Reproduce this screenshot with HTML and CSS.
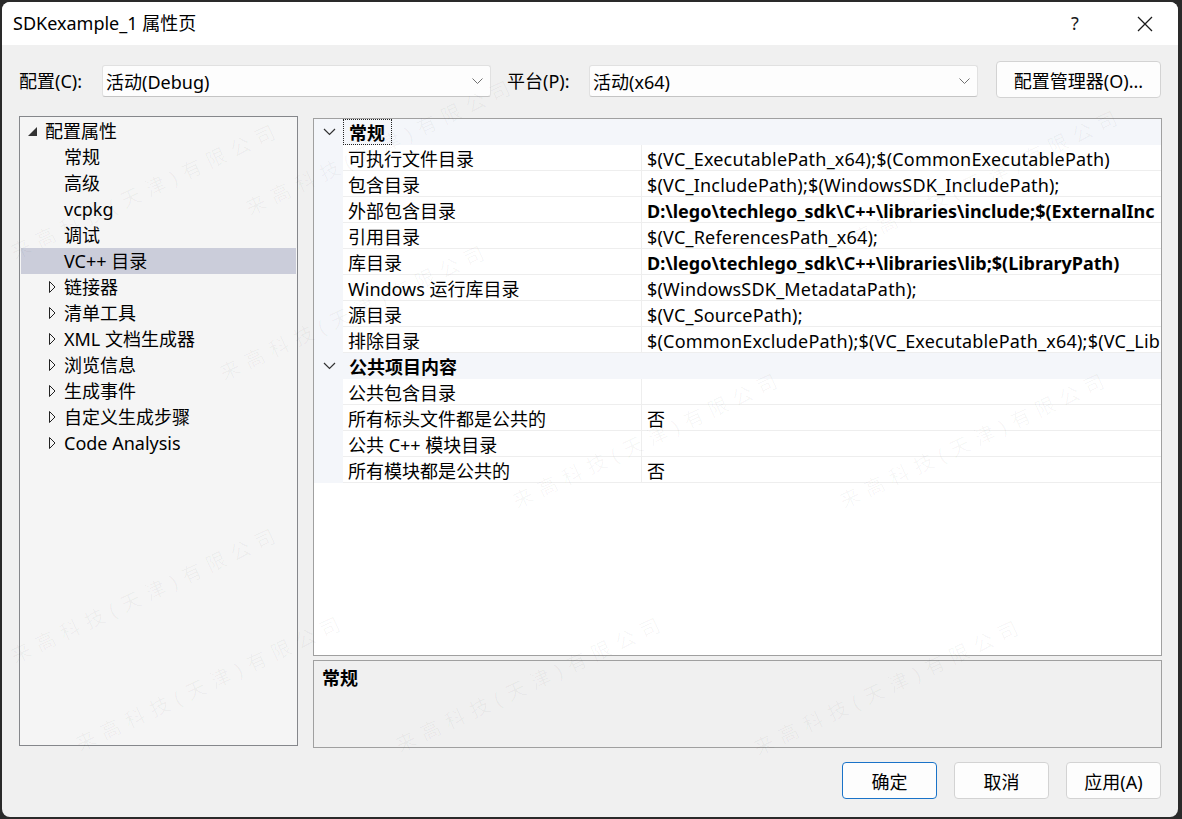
FILE: index.html
```html
<!DOCTYPE html>
<html>
<head lang="zh-CN">
    <meta charset="UTF-8">
    <title>SDKexample_1 属性页</title>
    <link rel="stylesheet" href="styles.css">
</head>
<body>
<div class="window">
    <div class="titlebar">
        <span class="title">SDKexample_1 属性页</span>
        <span class="help">?</span>
        <span class="close">
            <svg width="16" height="16" viewBox="0 0 16 16"><path d="M1 1L15 15M15 1L1 15" stroke="#1a1a1a" stroke-width="1.3" fill="none"/></svg>
        </span>
    </div>

    <div class="body">
        <div class="config-row">
            <span class="lbl">配置(C):</span>
            <div class="combo">
                <span>活动(Debug)</span>
                <svg width="11" height="6" viewBox="0 0 11 6"><path d="M0.5 0.5L5.5 5.5L10.5 0.5" stroke="#707070" fill="none"/></svg>
            </div>
            <span class="lbl lbl-platform">平台(P):</span>
            <div class="combo">
                <span>活动(x64)</span>
                <svg width="11" height="6" viewBox="0 0 11 6"><path d="M0.5 0.5L5.5 5.5L10.5 0.5" stroke="#707070" fill="none"/></svg>
            </div>
            <button class="btn btn-mgr">配置管理器(O)...</button>
        </div>

        <div class="main">
            <div class="tree">
                <div class="node root">
                    <svg class="tri-open" width="9" height="9" viewBox="0 0 9 9"><path d="M9 0L9 9L0 9Z" fill="#333"/></svg>
                    <span>配置属性</span>
                </div>
                <div class="node leaf">常规</div>
                <div class="node leaf">高级</div>
                <div class="node leaf">vcpkg</div>
                <div class="node leaf">调试</div>
                <div class="node leaf selected">VC++ 目录</div>
                <div class="node closed">
                    <svg class="tri" width="7" height="12" viewBox="0 0 7 12"><path d="M0.5 0.5L6 6L0.5 11.5Z" stroke="#222" fill="none"/></svg>
                    <span>链接器</span>
                </div>
                <div class="node closed">
                    <svg class="tri" width="7" height="12" viewBox="0 0 7 12"><path d="M0.5 0.5L6 6L0.5 11.5Z" stroke="#222" fill="none"/></svg>
                    <span>清单工具</span>
                </div>
                <div class="node closed">
                    <svg class="tri" width="7" height="12" viewBox="0 0 7 12"><path d="M0.5 0.5L6 6L0.5 11.5Z" stroke="#222" fill="none"/></svg>
                    <span>XML 文档生成器</span>
                </div>
                <div class="node closed">
                    <svg class="tri" width="7" height="12" viewBox="0 0 7 12"><path d="M0.5 0.5L6 6L0.5 11.5Z" stroke="#222" fill="none"/></svg>
                    <span>浏览信息</span>
                </div>
                <div class="node closed">
                    <svg class="tri" width="7" height="12" viewBox="0 0 7 12"><path d="M0.5 0.5L6 6L0.5 11.5Z" stroke="#222" fill="none"/></svg>
                    <span>生成事件</span>
                </div>
                <div class="node closed">
                    <svg class="tri" width="7" height="12" viewBox="0 0 7 12"><path d="M0.5 0.5L6 6L0.5 11.5Z" stroke="#222" fill="none"/></svg>
                    <span>自定义生成步骤</span>
                </div>
                <div class="node closed">
                    <svg class="tri" width="7" height="12" viewBox="0 0 7 12"><path d="M0.5 0.5L6 6L0.5 11.5Z" stroke="#222" fill="none"/></svg>
                    <span>Code Analysis</span>
                </div>
            </div>

            <div class="right">
                <div class="grid">
                    <div class="cat">
                        <svg class="chev" width="13" height="8" viewBox="0 0 13 8"><path d="M1 1L6.5 6.5L12 1" stroke="#333" stroke-width="1.2" fill="none"/></svg>
                        <span class="cat-name focus">常规</span>
                    </div>
                    <div class="prop"><span class="gutter"></span><span class="name">可执行文件目录</span><span class="value">$(VC_ExecutablePath_x64);$(CommonExecutablePath)</span></div>
                    <div class="prop"><span class="gutter"></span><span class="name">包含目录</span><span class="value">$(VC_IncludePath);$(WindowsSDK_IncludePath);</span></div>
                    <div class="prop"><span class="gutter"></span><span class="name">外部包含目录</span><span class="value bold">D:\lego\techlego_sdk\C++\libraries\include;$(ExternalInc</span></div>
                    <div class="prop"><span class="gutter"></span><span class="name">引用目录</span><span class="value">$(VC_ReferencesPath_x64);</span></div>
                    <div class="prop"><span class="gutter"></span><span class="name">库目录</span><span class="value bold">D:\lego\techlego_sdk\C++\libraries\lib;$(LibraryPath)</span></div>
                    <div class="prop"><span class="gutter"></span><span class="name">Windows 运行库目录</span><span class="value">$(WindowsSDK_MetadataPath);</span></div>
                    <div class="prop"><span class="gutter"></span><span class="name">源目录</span><span class="value">$(VC_SourcePath);</span></div>
                    <div class="prop"><span class="gutter"></span><span class="name">排除目录</span><span class="value">$(CommonExcludePath);$(VC_ExecutablePath_x64);$(VC_Lib</span></div>
                    <div class="cat">
                        <svg class="chev" width="13" height="8" viewBox="0 0 13 8"><path d="M1 1L6.5 6.5L12 1" stroke="#333" stroke-width="1.2" fill="none"/></svg>
                        <span class="cat-name">公共项目内容</span>
                    </div>
                    <div class="prop"><span class="gutter"></span><span class="name">公共包含目录</span><span class="value"></span></div>
                    <div class="prop"><span class="gutter"></span><span class="name">所有标头文件都是公共的</span><span class="value">否</span></div>
                    <div class="prop"><span class="gutter"></span><span class="name">公共 C++ 模块目录</span><span class="value"></span></div>
                    <div class="prop"><span class="gutter"></span><span class="name">所有模块都是公共的</span><span class="value">否</span></div>
                </div>
                <div class="desc">
                    <b>常规</b>
                </div>
            </div>
        </div>

        <div class="footer">
            <button class="btn btn-ok">确定</button>
            <button class="btn">取消</button>
            <button class="btn">应用(A)</button>
        </div>
    </div>

    <!-- watermark of the screenshot -->
    <div class="watermark">
        <span style="left:16px;top:236px">来高科技(天津)有限公司</span>
        <span style="left:251px;top:192px">来高科技(天津)有限公司</span>
        <span style="left:858px;top:222px">来高科技(天津)有限公司</span>
        <span style="left:225px;top:357px">来高科技(天津)有限公司</span>
        <span style="left:518px;top:485px">来高科技(天津)有限公司</span>
        <span style="left:845px;top:485px">来高科技(天津)有限公司</span>
        <span style="left:16px;top:640px">来高科技(天津)有限公司</span>
        <span style="left:81px;top:728px">来高科技(天津)有限公司</span>
        <span style="left:401px;top:729px">来高科技(天津)有限公司</span>
        <span style="left:759px;top:732px">来高科技(天津)有限公司</span>
    </div>
</div>
</body>
</html>
```

FILE: styles.css
```css
html, body {
    margin: 0;
    padding: 0;
}

body {
    background: #2a2a2a;
    font-family: "Noto Sans", "Noto Sans CJK SC", sans-serif;
    font-size: 18px;
    color: #000;
}

.window {
    position: relative;
    margin: 2px 0 0 2px;
    width: 1176px;
    height: 815px;
    background: #f0f0f0;
    border-radius: 8px;
    overflow: hidden;
}

/* title bar */
.titlebar {
    height: 43px;
    background: #fff;
    display: flex;
    align-items: center;
    padding-left: 11px;
}

.titlebar .title {
    flex: 1;
    line-height: 24px;
    margin-top: -2px;
}

.titlebar .help {
    width: 20px;
    text-align: center;
    font-size: 18px;
    color: #1a1a1a;
    margin-top: -2px;
}

.titlebar .close {
    display: flex;
    margin: 0 25px 0 52px;
}

.body {
    padding: 16px 16px 0 17px;
}

/* config row */
.config-row {
    display: flex;
    height: 37px;
}

.config-row .lbl {
    width: 83px;
    line-height: 32px;
    margin-top: 4px;
}

.config-row .lbl-platform {
    width: 82px;
    margin-left: 16px;
}

.combo {
    box-sizing: border-box;
    width: 389px;
    height: 32px;
    margin-top: 4px;
    border: 1px solid #e1e1e1;
    border-bottom-color: #c4c4c4;
    border-radius: 3px;
    background: #fdfdfd;
    display: flex;
    align-items: center;
    justify-content: space-between;
    padding: 0 7px 0 3px;
}

.btn {
    box-sizing: border-box;
    height: 37px;
    width: 95px;
    padding: 0;
    border: 1px solid #d3d3d3;
    border-radius: 4px;
    background: #fdfdfd;
    font-family: inherit;
    font-size: 18px;
    color: #000;
}

.btn-mgr {
    width: 165px;
    margin-left: 18px;
}

.btn-ok {
    border-color: #1a73c8;
}

/* main area */
.main {
    display: flex;
    margin-top: 18px;
}

.tree {
    box-sizing: border-box;
    width: 279px;
    height: 630px;
    border: 1px solid #85878b;
    background: #f5f5f5;
    padding: 1px;
}

.tree .node {
    height: 26px;
    line-height: 26px;
    display: flex;
    align-items: center;
    white-space: nowrap;
}

.tree .root .tri-open {
    margin: 0 8px 0 7px;
}

.tree .leaf {
    padding-left: 43px;
    line-height: 28px;
}

.tree .closed span {
    line-height: 28px;
}

.tree .closed .tri {
    margin: 0 8px 0 28px;
}

.tree .selected {
    background: #cbcdda;
}

.right {
    margin-left: 15px;
    width: 849px;
    padding-top: 2px;
}

.grid {
    box-sizing: border-box;
    height: 538px;
    border: 1px solid #a0a0a0;
    background: #fff;
    overflow: hidden;
}

.grid .cat {
    height: 26px;
    display: flex;
    align-items: center;
    background: #f4f6fa;
}

.grid .chev {
    margin: 0 7px 0 9px;
}

.grid .cat-name {
    font-weight: bold;
    line-height: 22px;
    padding: 2px 6px 0 5px;
    border: 1px solid transparent;
}

.grid .cat-name.focus {
    border: 1px dotted #222;
}

.grid .prop {
    display: flex;
    height: 26px;
}

.grid .gutter {
    width: 29px;
    background: #f4f6fa;
}

.grid .name, .grid .value {
    box-sizing: border-box;
    height: 26px;
    line-height: 25px;
    border-bottom: 1px solid #eeeeee;
    padding: 2px 0 0 5px;
    white-space: nowrap;
    overflow: hidden;
}

.grid .name {
    width: 299px;
    border-right: 1px solid #eeeeee;
}

.grid .value {
    flex: 1;
    letter-spacing: 0.2px;
}

.grid .bold {
    font-weight: bold;
    letter-spacing: 0;
}

.desc {
    box-sizing: border-box;
    margin-top: 4px;
    height: 88px;
    border: 1px solid #a0a0a0;
    background: #f0f0f0;
    padding: 5px 8px;
    line-height: 24px;
}

.footer {
    display: flex;
    justify-content: flex-end;
    gap: 17px;
    margin-top: 14px;
    padding-right: 1px;
}

/* faint diagonal watermark over everything */
.watermark {
    position: absolute;
    top: 0;
    left: 0;
    right: 0;
    bottom: 0;
    pointer-events: none;
    overflow: hidden;
}

.watermark span {
    position: absolute;
    font-size: 20px;
    line-height: 28px;
    letter-spacing: 7px;
    white-space: nowrap;
    color: rgba(0, 0, 0, 0.035);
    transform: rotate(-25deg);
    transform-origin: 0 100%;
}
```
